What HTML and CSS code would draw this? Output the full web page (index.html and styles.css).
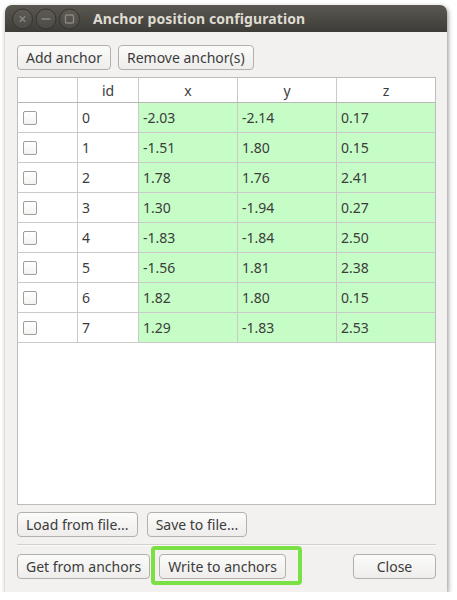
FILE: index.html
```html
<!DOCTYPE html>
<html>
<head>
<meta charset="utf-8">
<link rel="stylesheet" href="styles.css">
</head>
<body>
<div class="window">
  <div class="titlebar">
    <svg class="wm" width="80" height="27" viewBox="0 0 80 27">
      <defs>
        <linearGradient id="cg" x1="0" y1="0" x2="0" y2="1">
          <stop offset="0" stop-color="#5e5b54"/>
          <stop offset="1" stop-color="#4c4a45"/>
        </linearGradient>
      </defs>
      <circle cx="17.5" cy="14" r="10" fill="url(#cg)" stroke="#35342f" stroke-width="1"/>
      <path d="M14.8 11.3 L20.2 16.7 M20.2 11.3 L14.8 16.7" stroke="#8a877f" stroke-width="1.4"/>
      <circle cx="41" cy="14" r="10" fill="url(#cg)" stroke="#35342f" stroke-width="1"/>
      <path d="M36.5 14 L45.5 14" stroke="#8a877f" stroke-width="1.6"/>
      <circle cx="64.5" cy="14" r="10" fill="url(#cg)" stroke="#35342f" stroke-width="1"/>
      <rect x="60.5" y="10" width="8" height="8" rx="1" fill="none" stroke="#8a877f" stroke-width="1.4"/>
    </svg>
    <span class="title">Anchor position configuration</span>
  </div>
  <div class="content">
    <div class="row top">
      <button class="btn">Add anchor</button>
      <button class="btn">Remove anchor(s)</button>
    </div>
    <div class="table-wrap">
      <table class="grid">
        <colgroup>
          <col class="c-chk"><col class="c-id"><col class="c-x"><col class="c-y"><col class="c-z">
        </colgroup>
        <thead>
          <tr><th></th><th>id</th><th>x</th><th>y</th><th>z</th></tr>
        </thead>
        <tbody>
          <tr><td><span class="chk"></span></td><td>0</td><td class="g">-2.03</td><td class="g">-2.14</td><td class="g">0.17</td></tr>
          <tr><td><span class="chk"></span></td><td>1</td><td class="g">-1.51</td><td class="g">1.80</td><td class="g">0.15</td></tr>
          <tr><td><span class="chk"></span></td><td>2</td><td class="g">1.78</td><td class="g">1.76</td><td class="g">2.41</td></tr>
          <tr><td><span class="chk"></span></td><td>3</td><td class="g">1.30</td><td class="g">-1.94</td><td class="g">0.27</td></tr>
          <tr><td><span class="chk"></span></td><td>4</td><td class="g">-1.83</td><td class="g">-1.84</td><td class="g">2.50</td></tr>
          <tr><td><span class="chk"></span></td><td>5</td><td class="g">-1.56</td><td class="g">1.81</td><td class="g">2.38</td></tr>
          <tr><td><span class="chk"></span></td><td>6</td><td class="g">1.82</td><td class="g">1.80</td><td class="g">0.15</td></tr>
          <tr><td><span class="chk"></span></td><td>7</td><td class="g">1.29</td><td class="g">-1.83</td><td class="g">2.53</td></tr>
        </tbody>
      </table>
    </div>
    <div class="row file">
      <button class="btn">Load from file...</button>
      <button class="btn">Save to file...</button>
    </div>
    <div class="sep"></div>
    <div class="row bottom">
      <button class="btn">Get from anchors</button>
      <span class="hl-wrap">
        <button class="btn write">Write to anchors</button>
        <span class="highlight"></span>
      </span>
      <button class="btn close">Close</button>
    </div>
  </div>
</div>
</body>
</html>
```
FILE: styles.css
```css
* { box-sizing: border-box; }
html, body { margin: 0; padding: 0; background: #ffffff; }
body {
  font-family: "Noto Sans", "Open Sans", sans-serif;
  font-size: 14px;
  color: #3c3c3c;
}
.window {
  margin: 5px 0 0 5px;
  width: 442px;
  height: 587px;
  background: #f2f1f0;
  border-radius: 7px 7px 0 0;
  box-shadow: 1px 2px 5px rgba(0,0,0,0.45);
  display: flex;
  flex-direction: column;
  overflow: hidden;
}
.titlebar {
  height: 27px;
  flex: none;
  background: linear-gradient(#5a5850, #3d3c38);
  display: flex;
  align-items: center;
}
.wm { display: block; flex: none; }
.title {
  margin-left: 8px;
  color: #dfdbd2;
  font-weight: bold;
  font-size: 14px;
  letter-spacing: 0.1px;
}
.content {
  flex: 1;
  display: flex;
  flex-direction: column;
  padding: 13px 11px 0 12px;
}
.row { display: flex; align-items: center; }
.top { gap: 7px; }
.btn {
  font-family: "Noto Sans", "Open Sans", sans-serif;
  font-size: 14px;
  color: #3c3c3c;
  height: 25px;
  padding: 0 8px;
  border: 1px solid #b3b0aa;
  border-radius: 4px;
  background: linear-gradient(#fbfbfa, #eeedeb);
  line-height: 23px;
  margin: 0;
}
.table-wrap {
  margin-top: 7px;
  height: 428px;
  background: #ffffff;
  border: 1px solid #bebdbb;
  overflow: hidden;
}
.grid {
  border-collapse: collapse;
  table-layout: fixed;
  width: 418px;
  margin: -1px 0 0 -1px;
}
.c-chk { width: 60px; }
.c-id { width: 61px; }
.c-x { width: 99px; }
.c-y { width: 99px; }
.c-z { width: 99px; }
.grid th, .grid td {
  border: 1px solid #cbcac8;
  padding: 0 4px;
  font-weight: normal;
  white-space: nowrap;
}
.grid th {
  height: 25px;
  text-align: center;
  border-bottom-color: #b8b7b5;
}
.grid td {
  height: 30px;
  text-align: left;
}
.grid td.g { background: #c6fdc6; }
.chk {
  display: block;
  width: 14px;
  height: 14px;
  margin-left: 1px;
  border: 1px solid #a09e9a;
  border-radius: 2px;
  background: linear-gradient(#ffffff, #f4f3f2);
}
.file { margin-top: 7px; gap: 9px; }
.sep {
  margin-top: 7px;
  height: 1px;
  background: #d2d0cd;
  border-bottom: 1px solid #fafafa;
  box-sizing: content-box;
}
.bottom { margin-top: 8px; }
.hl-wrap {
  position: relative;
  margin-left: 9px;
  display: inline-block;
}
.hl-wrap .btn { display: block; }
.highlight {
  position: absolute;
  left: -8px;
  top: -8px;
  width: 151px;
  height: 39px;
  border: 4px solid #7be043;
  border-radius: 4px;
}
.close { margin-left: auto; width: 83px; padding: 0; }
```
